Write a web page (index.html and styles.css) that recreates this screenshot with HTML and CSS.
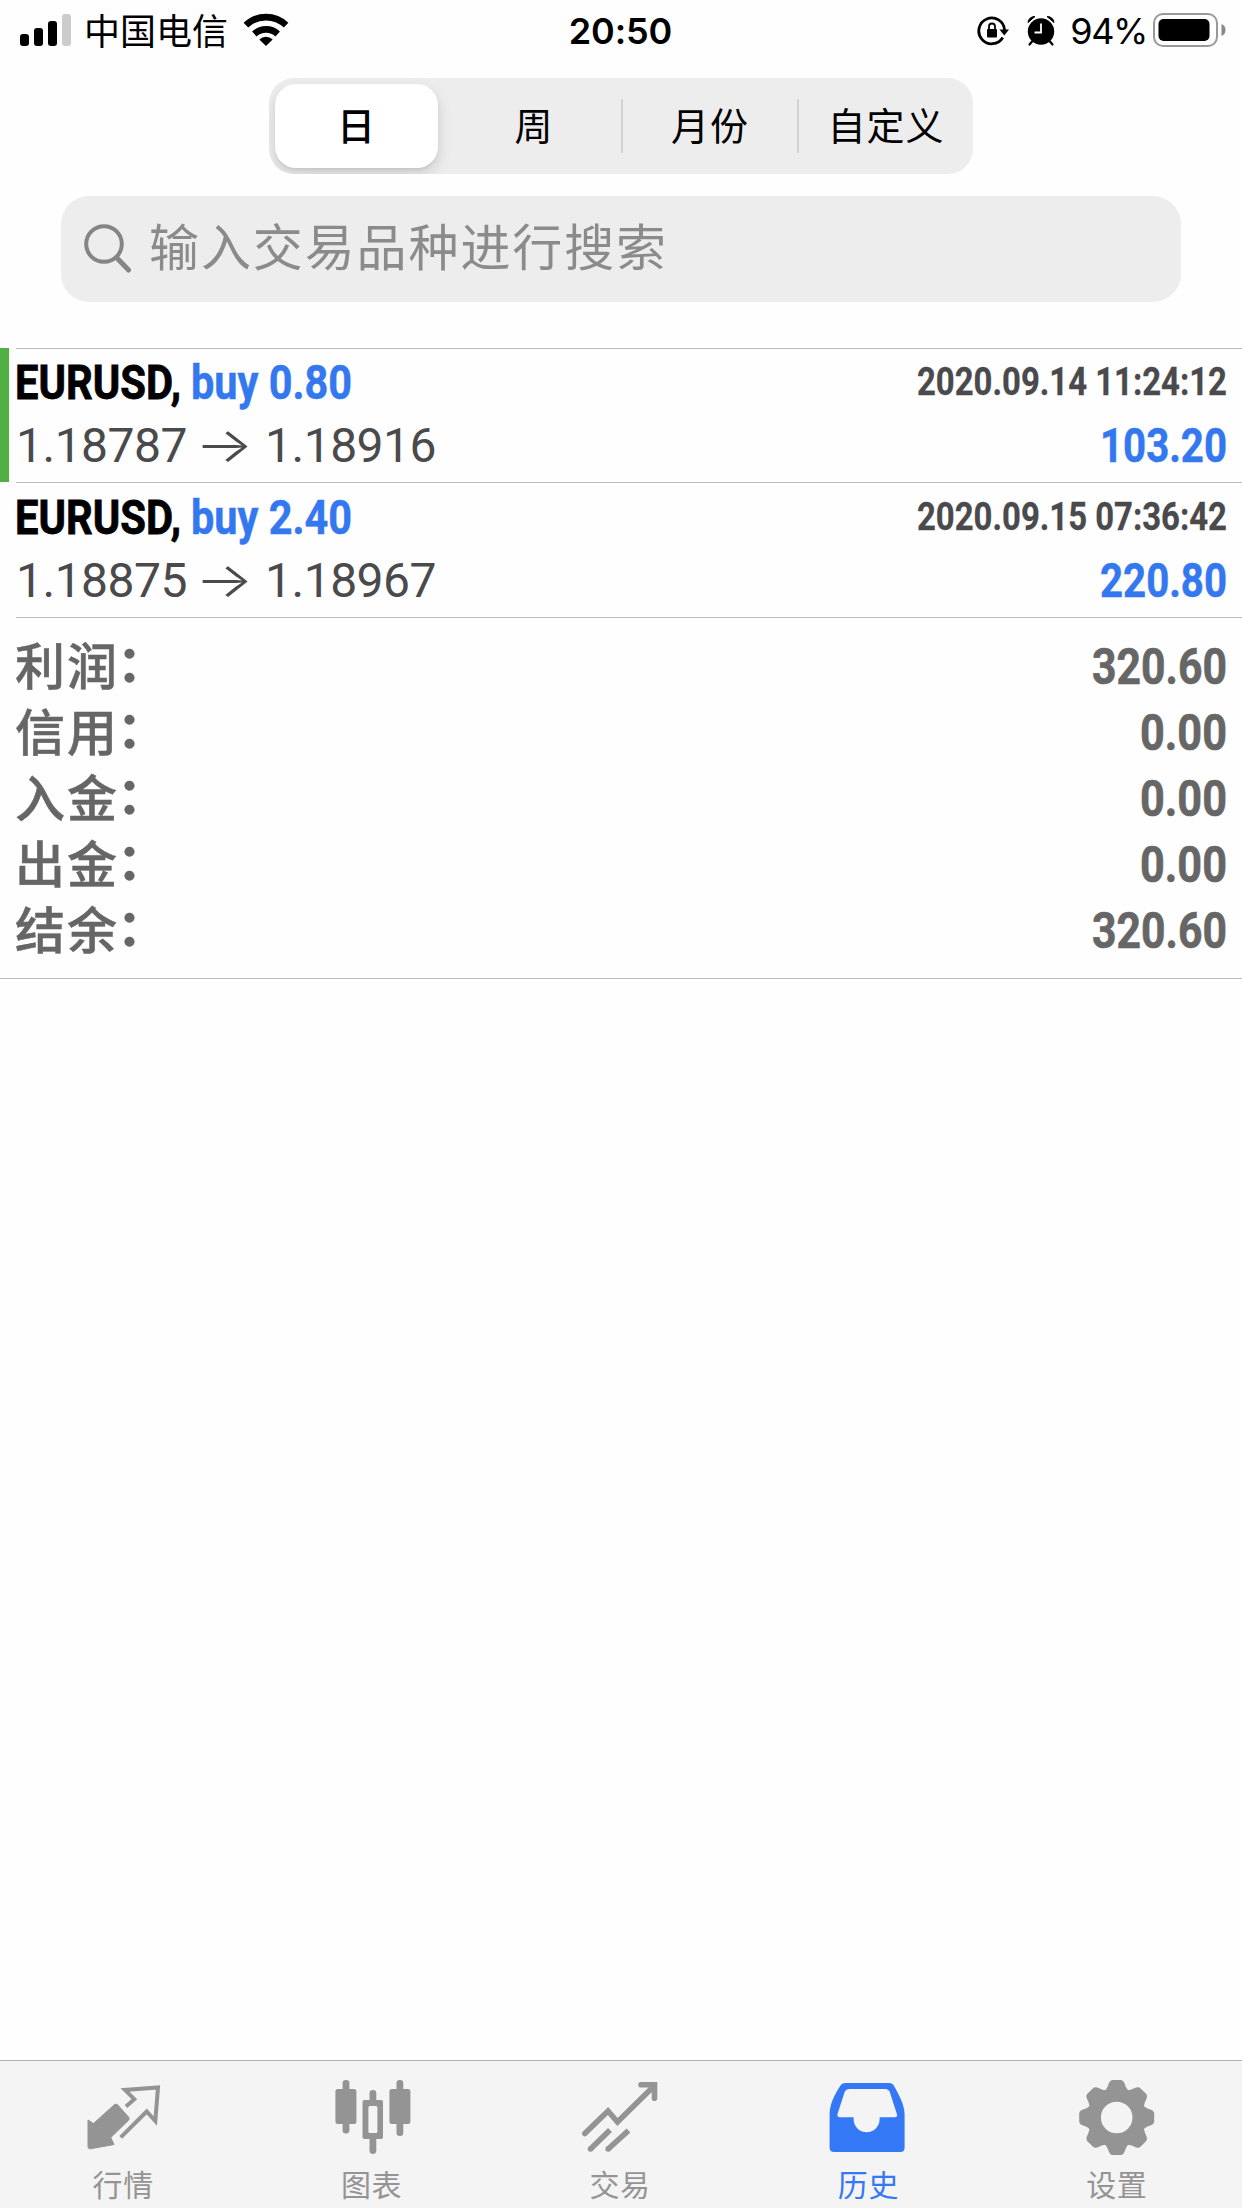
FILE: index.html
```html
<!DOCTYPE html>
<html lang="zh-CN">
<head>
<meta charset="utf-8">
<title>历史</title>
<link rel="stylesheet" href="styles.css">
</head>
<body>
<div class="app">
  <header class="status">
    <div class="status-left">
      <svg class="signal" width="52" height="34" viewBox="0 0 52 34"><rect x="0" y="21" width="9" height="12" rx="3"/><rect x="14" y="15" width="9" height="18" rx="3"/><rect x="28" y="8" width="9" height="25" rx="3"/><rect x="42" y="1" width="9" height="32" rx="3" fill="#ccc"/></svg>
      <span class="carrier">中国电信</span>
      <svg class="wifi" width="46" height="34" viewBox="0 0 46 34"><g fill="none" stroke="#000" stroke-width="6.6"><path d="M2.9 12.2a29 29 0 0 1 40.2 0"/><path d="M11.3 21a17.2 17.2 0 0 1 23.4 0"/></g><path d="M23 33l-6.700-6.600a9.800 9.800 0 0 1 13.400 0z"/></svg>
    </div>
    <div class="time">20:50</div>
    <div class="status-right">
      <svg class="lock" width="34" height="32" viewBox="0 0 34 32"><path d="M25.800 22.500A12.900 12.900 0 1 1 27.600 15" fill="none" stroke="#000" stroke-width="2.800"/><path d="M22.500 14.500h9.500l-4.700 6z"/><rect x="10" y="14" width="10" height="8.500" rx="1"/><path d="M12 14v-2.500a3 3 0 0 1 6 0V14" fill="none" stroke="#000" stroke-width="1.800"/></svg>
      <svg class="alarm" width="28" height="32" viewBox="0 0 28 32"><circle cx="14" cy="16.500" r="13.200"/><path d="M1 7.500A6.500 6.500 0 0 1 8 1.500zM27 7.500a6.500 6.500 0 0 0-7-6z" stroke="#000" stroke-linejoin="round"/><path d="M5.500 26l-3 3.500M22.500 26l3 3.500" stroke="#000" stroke-width="2.200" stroke-linecap="round"/><path d="M14 8.500v9H7.500" fill="none" stroke="#fff" stroke-width="1.800"/></svg>
      <span class="percent">94%</span>
      <svg class="battery" width="74" height="34" viewBox="0 0 74 34"><rect x="1" y="1" width="63" height="32" rx="9" fill="none" stroke="#999" stroke-width="2"/><rect x="5.500" y="6" width="51" height="22" rx="5"/><path d="M68.500 11q4 1.500 4 6t-4 6z" fill="#888"/></svg>
    </div>
  </header>

  <nav class="segments">
    <div class="segment selected">日</div>
    <div class="segment">周</div>
    <div class="segment divided">月份</div>
    <div class="segment divided">自定义</div>
  </nav>

  <div class="search">
    <svg width="50" height="52" viewBox="0 0 50 52"><circle cx="20" cy="21" r="17.800" fill="none" stroke="#858585" stroke-width="4"/><path d="M32.500 34.500L44.500 47" stroke="#858585" stroke-width="5" stroke-linecap="round"/></svg>
    <span>输入交易品种进行搜索</span>
  </div>

  <main class="deals">
    <section class="deal marked">
      <div class="deal-body">
        <div class="deal-left">
          <svg class="cond" width="360" height="66"><text class="symbol" x="-1" y="50" textLength="166" lengthAdjust="spacingAndGlyphs">EURUSD,</text><text class="side" x="175" y="50" textLength="161" lengthAdjust="spacingAndGlyphs">buy 0.80</text></svg>
          <div class="prices"><span>1.18787</span><span class="arrow">→</span><span>1.18916</span></div>
        </div>
        <div class="deal-right">
          <svg class="cond" width="340" height="66"><text class="date" x="20" y="46" textLength="310" lengthAdjust="spacingAndGlyphs">2020.09.14 11:24:12</text></svg>
          <svg class="cond" width="340" height="60"><text class="side" x="203" y="47" textLength="127" lengthAdjust="spacingAndGlyphs">103.20</text></svg>
        </div>
      </div>
    </section>
    <section class="deal">
      <div class="deal-body">
        <div class="deal-left">
          <svg class="cond" width="360" height="66"><text class="symbol" x="-1" y="50" textLength="166" lengthAdjust="spacingAndGlyphs">EURUSD,</text><text class="side" x="175" y="50" textLength="161" lengthAdjust="spacingAndGlyphs">buy 2.40</text></svg>
          <div class="prices"><span>1.18875</span><span class="arrow">→</span><span>1.18967</span></div>
        </div>
        <div class="deal-right">
          <svg class="cond" width="340" height="66"><text class="date" x="20" y="46" textLength="310" lengthAdjust="spacingAndGlyphs">2020.09.15 07:36:42</text></svg>
          <svg class="cond" width="340" height="60"><text class="side" x="203" y="47" textLength="127" lengthAdjust="spacingAndGlyphs">220.80</text></svg>
        </div>
      </div>
    </section>
    <section class="summary">
      <div class="sum-row"><span>利润<i>：</i></span><svg class="cond" width="170" height="66"><text class="total" x="25" y="51" textLength="135" lengthAdjust="spacingAndGlyphs">320.60</text></svg></div>
      <div class="sum-row"><span>信用<i>：</i></span><svg class="cond" width="170" height="66"><text class="total" x="73" y="51" textLength="87" lengthAdjust="spacingAndGlyphs">0.00</text></svg></div>
      <div class="sum-row"><span>入金<i>：</i></span><svg class="cond" width="170" height="66"><text class="total" x="73" y="51" textLength="87" lengthAdjust="spacingAndGlyphs">0.00</text></svg></div>
      <div class="sum-row"><span>出金<i>：</i></span><svg class="cond" width="170" height="66"><text class="total" x="73" y="51" textLength="87" lengthAdjust="spacingAndGlyphs">0.00</text></svg></div>
      <div class="sum-row"><span>结余<i>：</i></span><svg class="cond" width="170" height="66"><text class="total" x="25" y="51" textLength="135" lengthAdjust="spacingAndGlyphs">320.60</text></svg></div>
    </section>
  </main>

  <footer class="tabs">
    <div class="tab"><svg width="80" height="82" viewBox="0 0 80 82"><path d="M4 45l5.500 3.500L30 30q2-2 4 .2L44.500 42q1.500 1.700 0 3.300L26.800 62.500l3.200 7-23.500 4.300Q4 74 4 72z" fill="currentColor" stroke="currentColor" stroke-width="1" stroke-linejoin="round"/><path d="M42 31.500l8.300-7.300-9.300-9.200 33-2.500L71.300 46l-8.600-9.500-26 25.800" fill="none" stroke="currentColor" stroke-width="4"/></svg><span>行情</span></div>
    <div class="tab"><svg width="80" height="82" viewBox="0 0 80 82"><g fill="currentColor"><rect x="2.400" y="14" width="21" height="35" rx="2.500"/><rect x="9.600" y="5" width="6.800" height="53.500" rx="3.200"/><rect x="56.400" y="14" width="21" height="35" rx="2.500"/><rect x="63.500" y="5" width="6.800" height="56" rx="3.200"/><path fill-rule="evenodd" d="M36.500 25V18.500a3.400 3.400 0 0 1 6.800 0V25H48q2 0 2 2v35q0 2-2 2h-4.700v11.500a3.400 3.400 0 0 1-6.800 0V64h-5q-2 0-2-2V27q0-2 2-2zM35.400 32.500v24q0 1.500 1.500 1.500h6q1.500 0 1.500-1.500v-24q0-1.500-1.500-1.500h-6q-1.500 0-1.500 1.500z"/></g></svg><span>图表</span></div>
    <div class="tab"><svg width="80" height="82" viewBox="0 0 80 82"><g fill="none" stroke="currentColor" stroke-width="5.600"><path d="M3.800 58.500L27 36l9.500 11L73 11" stroke-linecap="round"/><path d="M60 9.700h13.500v13.500" stroke-linecap="round"/><path d="M9.500 74L29 55M27.200 74L47.500 55.500"/><path d="M9.500 74h.1M27.200 74h.1" stroke-linecap="round"/></g></svg><span>交易</span></div>
    <div class="tab active"><svg width="80" height="82" viewBox="0 0 80 82"><path fill="currentColor" fill-rule="evenodd" d="M16.500 8H60q3.500 0 5.200 3.200C70 20 75.600 30 75.600 39v33.500q0 4.500-4.500 4.500h-66Q.6 77 .6 72.500V39c0-9 4.700-19 10.400-27.800Q13 8 16.500 8zM20 14q-3 0-4.200 2.600L8.600 38.700q-1 3.600 2.400 3.600h13.600v2a13 13 0 0 0 26 0v-2h15q3.400 0 2.200-3.600L60.600 16.600Q59.500 14 56.500 14z"/></svg><span>历史</span></div>
    <div class="tab"><svg width="80" height="82" viewBox="0 0 80 82"><defs><path id="tooth" d="M-13-25Q-9-30-8.300-33Q-6.800-37.500-4-37.500H4Q6.800-37.500 8.300-33Q9-30 13-25z"/></defs><g fill="currentColor" transform="translate(38.700 42.500)"><circle r="22.500" fill="none" stroke="currentColor" stroke-width="13.400"/><use href="#tooth"/><use href="#tooth" transform="rotate(45)"/><use href="#tooth" transform="rotate(90)"/><use href="#tooth" transform="rotate(135)"/><use href="#tooth" transform="rotate(180)"/><use href="#tooth" transform="rotate(225)"/><use href="#tooth" transform="rotate(270)"/><use href="#tooth" transform="rotate(315)"/></g></svg><span>设置</span></div>
  </footer>
</div>
</body>
</html>
```

FILE: styles.css
```css
* { box-sizing: border-box; }

body {
  margin: 0;
  background: #fefefe;
  color: #000;
  font-family: "Inter", "Noto Sans CJK SC", sans-serif;
}

svg { display: block; flex: none; }

.app {
  display: flex;
  flex-direction: column;
  width: 1242px;
  height: 2208px;
}

/* Status bar */
.status {
  display: grid;
  grid-template-columns: 1fr auto 1fr;
  height: 62px;
  padding: 0 15px 0 20px;
  align-items: center;
  font-size: 36px;
  line-height: 62px;
}
.status-left, .status-right { display: flex; align-items: center; }
.status-right { justify-content: flex-end; }
.signal { margin-top: -3px; }
.carrier { margin-left: 12px; margin-top: -5px; font-family: "Noto Sans CJK SC", sans-serif; }
.wifi { margin-left: 15px; margin-top: -3px; }
.time { margin-right: 6px; font-weight: 600; letter-spacing: -0.1px; }
.alarm { margin-left: 16px; }
.percent { margin-left: 15px; letter-spacing: -1.4px; }
.battery { margin-left: 6px; margin-top: -3px; }

/* Period selector */
.segments {
  display: flex;
  align-self: center;
  width: 704px;
  height: 96px;
  margin-top: 16px;
  border-radius: 25px;
  background: #ededed;
  overflow: hidden;
}
.segment {
  flex: 1;
  display: flex;
  align-items: center;
  justify-content: center;
  font: 400 38px/90px "Noto Sans CJK SC", sans-serif;
  letter-spacing: 1px;
  padding-bottom: 4px;
  padding-left: 2px;
}
.segment.selected {
  flex: none;
  width: 163px;
  margin: 6px 7px 6px 6px;
  border-radius: 21px;
  background: #fff;
  font-weight: 500;
  padding-left: 0;
  box-shadow: 0 6px 14px rgba(0, 0, 0, 0.14), 0 2px 3px rgba(0, 0, 0, 0.05);
}
.segment.divided {
  background: linear-gradient(#d2d2d2, #d2d2d2) left center / 2px 54px no-repeat;
}

/* Search field */
.search {
  display: flex;
  align-items: center;
  height: 106px;
  margin: 22px 61px 0;
  padding-left: 23px;
  border-radius: 28px;
  background: #ededed;
}
.search span {
  margin-left: 15px;
  padding-bottom: 10px;
  color: #8b8b8b;
  font: 400 50px/100px "Noto Sans CJK SC", sans-serif;
  letter-spacing: 1.9px;
}

/* Deals */
.deals { flex: 1; margin-top: 46px; }
.deal {
  display: flex;
  height: 135px;
  padding-left: 16px;
}
.deal.marked {
  height: 134px;
  padding-left: 7px;
  border-left: 9px solid #50b044;
}
.deal-body {
  flex: 1;
  display: flex;
  justify-content: space-between;
  padding: 1px 5px 0 0;
  border-top: 1px solid #bcbcbc;
}
.marked .deal-body { padding-top: 0; }
.cond { overflow: visible; font-family: "Roboto", sans-serif; font-weight: 700; }
.symbol { font-size: 48px; fill: #000; stroke: #000; stroke-width: 0.8px; }
.side { font-size: 48px; fill: #3478f0; stroke: #3478f0; stroke-width: 0.5px; }
.date { font-size: 39px; fill: #4a4a4c; stroke: #4a4a4c; stroke-width: 0.3px; }
.total { font-size: 50px; fill: #666; stroke: #666; stroke-width: 0.6px; }
.prices {
  display: flex;
  align-items: baseline;
  color: #4a4a4c;
  font: 400 48px/62px "Roboto", sans-serif;
  letter-spacing: -0.5px;
}
.prices .arrow {
  width: 78px;
  text-align: center;
  font-family: "Inter", sans-serif;
  font-weight: 300;
  line-height: 40px;
  transform: translateX(-2px) scaleX(1.28);
}

/* Totals */
.summary {
  height: 362px;
  padding: 16px 5px 0 16px;
  border-bottom: 1px solid #bcbcbc;
  background: linear-gradient(#bcbcbc, #bcbcbc) 16px 0 / 100% 1px no-repeat;
}
.sum-row {
  display: flex;
  justify-content: space-between;
  height: 66px;
  color: #666;
  font: 500 50px/60px "Noto Sans CJK SC", sans-serif;
}
.sum-row span { margin-left: -1px; letter-spacing: 2px; -webkit-text-stroke: 0.5px #666; }
.sum-row i { position: relative; top: -3px; left: -2px; font-style: normal; font-weight: 700; }

/* Tab bar */
.tabs {
  display: flex;
  height: 148px;
  border-top: 1px solid #b2b5b2;
  background: #f4f4f4;
}
.tab {
  flex: 1;
  display: flex;
  flex-direction: column;
  align-items: center;
  padding-top: 14px;
  color: #949494;
}
.tab span {
  margin: 4px 2px 0 0;
  font: 400 30px/44px "Noto Sans CJK SC", sans-serif;
  letter-spacing: 0.6px;
}
.tab.active { color: #3478f6; }
```
